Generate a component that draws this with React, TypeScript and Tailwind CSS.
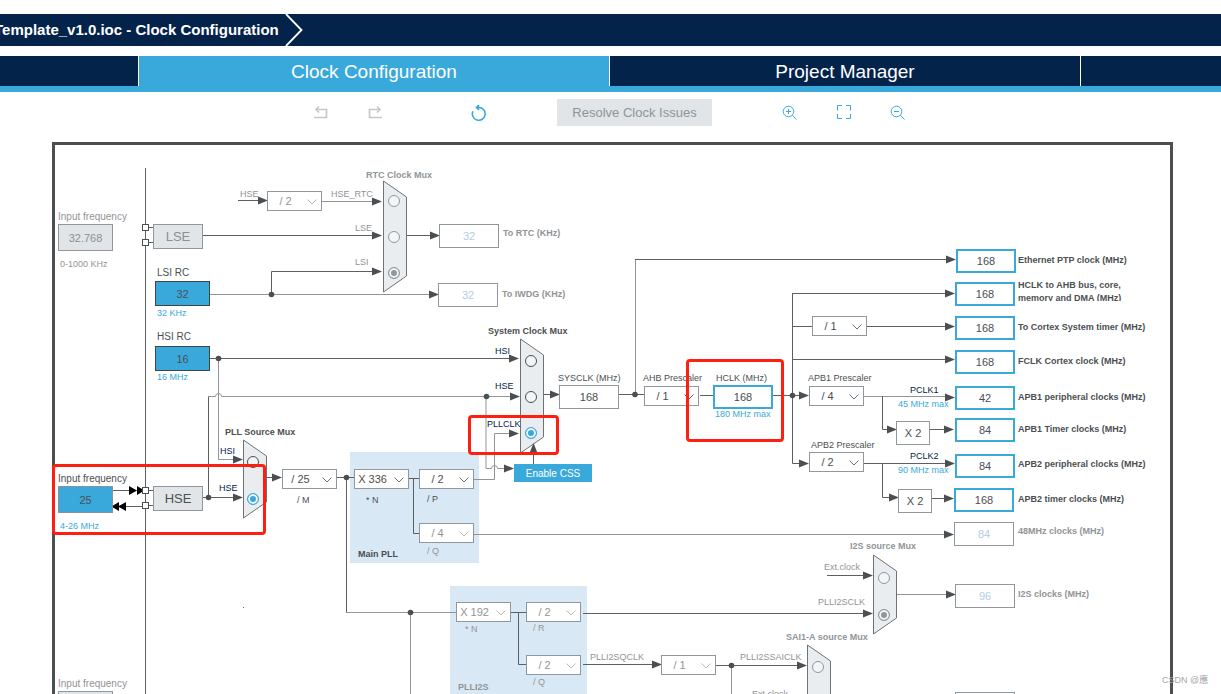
import type { CSSProperties, ReactNode } from 'react';
import { clsx } from 'clsx';

// Diagram coordinates count from the window corner, FRAME is where the drawing area starts
const FRAME = { x: 55, y: 145 };

const at = (x: number, y: number, w?: number, h?: number): CSSProperties => ({
  left: x - FRAME.x,
  top: y - FRAME.y,
  width: w,
  height: h,
});

type Tone = 'dark' | 'muted' | 'blue' | 'navy';

type LabelDef = {
  text: string;
  x: number;
  y: number;
  tone?: Tone;
  bold?: boolean;
  large?: boolean;
  htmlFor?: string;
};

type FieldKind = 'source' | 'sourceDark' | 'idle' | 'plain' | 'active' | 'off';

type FieldDef = {
  id: string;
  value: string;
  x: number;
  y: number;
  w: number;
  h: number;
  kind: FieldKind;
  name?: string;
};

type SelectDef = {
  id: string;
  value: string;
  x: number;
  y: number;
  off?: boolean;
  name?: string;
};

type MuxDef = {
  name: string;
  x: number;
  y: number;
  h: number;
  radioX: number;
  inputs: { label: string; y: number }[];
  selected: string;
  off?: boolean;
};

type WireDef = { d: string; soft?: boolean };
type ArrowDef = { x: number; y: number; up?: boolean };

const labels: LabelDef[] = [
  { text: 'Input frequency', x: 58, y: 220, tone: 'muted', large: true, htmlFor: 'lse-in' },
  { text: '0-1000 KHz', x: 60, y: 267, tone: 'muted' },
  { text: 'LSI RC', x: 157, y: 276, large: true, htmlFor: 'lsi' },
  { text: '32 KHz', x: 157, y: 316, tone: 'blue' },
  { text: 'HSI RC', x: 157, y: 340, large: true, htmlFor: 'hsi' },
  { text: '16 MHz', x: 157, y: 380, tone: 'blue' },
  { text: 'Input frequency', x: 58, y: 482, large: true, htmlFor: 'hse-in' },
  { text: '4-26 MHz', x: 60, y: 529, tone: 'blue' },
  { text: 'Input frequency', x: 58, y: 687, tone: 'muted', large: true, htmlFor: 'i2s-in' },

  { text: 'RTC Clock Mux', x: 366, y: 178, tone: 'muted', bold: true },
  { text: 'HSE', x: 240, y: 197, tone: 'muted' },
  { text: 'HSE_RTC', x: 331, y: 197, tone: 'muted' },
  { text: 'LSE', x: 355, y: 231, tone: 'muted' },
  { text: 'LSI', x: 355, y: 265, tone: 'muted' },
  { text: 'To RTC (KHz)', x: 503, y: 236, tone: 'muted', bold: true, htmlFor: 'rtc' },
  { text: 'To IWDG (KHz)', x: 502, y: 297, tone: 'muted', bold: true, htmlFor: 'iwdg' },

  { text: 'PLL Source Mux', x: 225, y: 435, bold: true },
  { text: 'HSI', x: 220, y: 454, tone: 'navy' },
  { text: 'HSE', x: 219, y: 491, tone: 'navy' },
  { text: '/ M', x: 297, y: 503, htmlFor: 'pll-m' },
  { text: '* N', x: 366, y: 503, htmlFor: 'pll-n' },
  { text: '/ P', x: 427, y: 502, htmlFor: 'pll-p' },
  { text: '/ Q', x: 427, y: 554, tone: 'muted', htmlFor: 'pll-q' },
  { text: 'Main PLL', x: 358, y: 557, bold: true },
  { text: '* N', x: 465, y: 632, tone: 'muted', htmlFor: 'i2s-n' },
  { text: '/ R', x: 533, y: 631, tone: 'muted', htmlFor: 'i2s-r' },
  { text: '/ Q', x: 533, y: 685, tone: 'muted', htmlFor: 'i2s-q' },
  { text: 'PLLI2S', x: 458, y: 690, tone: 'muted', bold: true },

  { text: 'System Clock Mux', x: 488, y: 334, bold: true },
  { text: 'HSI', x: 495, y: 354, tone: 'navy' },
  { text: 'HSE', x: 495, y: 389, tone: 'navy' },
  { text: 'PLLCLK', x: 487, y: 427, tone: 'navy' },
  { text: 'SYSCLK (MHz)', x: 558, y: 381, htmlFor: 'sysclk' },
  { text: 'AHB Prescaler', x: 643, y: 381, htmlFor: 'ahb' },
  { text: 'HCLK (MHz)', x: 716, y: 381, htmlFor: 'hclk' },
  { text: '180 MHz max', x: 715, y: 417, tone: 'blue' },

  { text: 'APB1 Prescaler', x: 808, y: 381, htmlFor: 'apb1' },
  { text: 'PCLK1', x: 910, y: 393, tone: 'navy' },
  { text: '45 MHz max', x: 898, y: 407, tone: 'blue' },
  { text: 'APB2 Prescaler', x: 811, y: 448, htmlFor: 'apb2' },
  { text: 'PCLK2', x: 910, y: 459, tone: 'navy' },
  { text: '90 MHz max', x: 898, y: 473, tone: 'blue' },

  { text: 'Ethernet PTP clock (MHz)', x: 1018, y: 263, bold: true, htmlFor: 'eth' },
  { text: 'To Cortex System timer (MHz)', x: 1018, y: 330, bold: true, htmlFor: 'systick' },
  { text: 'FCLK Cortex clock (MHz)', x: 1018, y: 364, bold: true, htmlFor: 'fclk' },
  { text: 'APB1 peripheral clocks (MHz)', x: 1018, y: 400, bold: true, htmlFor: 'apb1-p' },
  { text: 'APB1 Timer clocks (MHz)', x: 1018, y: 432, bold: true, htmlFor: 'apb1-t' },
  { text: 'APB2 peripheral clocks (MHz)', x: 1018, y: 467, bold: true, htmlFor: 'apb2-p' },
  { text: 'APB2 timer clocks (MHz)', x: 1018, y: 502, bold: true, htmlFor: 'apb2-t' },
  { text: '48MHz clocks (MHz)', x: 1018, y: 534, tone: 'muted', bold: true, htmlFor: 'usb' },
  { text: 'I2S clocks (MHz)', x: 1018, y: 597, tone: 'muted', bold: true, htmlFor: 'i2s' },

  { text: 'I2S source Mux', x: 850, y: 549, tone: 'muted', bold: true },
  { text: 'Ext.clock', x: 824, y: 570, tone: 'muted' },
  { text: 'PLLI2SCLK', x: 818, y: 605, tone: 'muted' },
  { text: 'SAI1-A source Mux', x: 786, y: 640, tone: 'muted', bold: true },
  { text: 'PLLI2SQCLK', x: 590, y: 660, tone: 'muted' },
  { text: 'PLLI2SSAICLK', x: 740, y: 660, tone: 'muted' },
  { text: 'Ext.clock', x: 752, y: 697, tone: 'muted' },
];

const fields: FieldDef[] = [
  { id: 'lse-in', value: '32.768', x: 58, y: 224, w: 55, h: 27, kind: 'idle' },
  { id: 'lsi', value: '32', x: 155, y: 281, w: 55, h: 25, kind: 'sourceDark' },
  { id: 'hsi', value: '16', x: 155, y: 346, w: 55, h: 25, kind: 'sourceDark' },
  { id: 'hse-in', value: '25', x: 58, y: 486, w: 55, h: 27, kind: 'source' },
  { id: 'i2s-in', value: '', x: 58, y: 691, w: 55, h: 27, kind: 'idle' },
  { id: 'rtc', value: '32', x: 439, y: 224, w: 60, h: 24, kind: 'off' },
  { id: 'iwdg', value: '32', x: 438, y: 283, w: 60, h: 24, kind: 'off' },
  { id: 'sysclk', value: '168', x: 559, y: 385, w: 60, h: 24, kind: 'plain' },
  { id: 'hclk', value: '168', x: 713, y: 385, w: 60, h: 24, kind: 'active' },
  { id: 'eth', value: '168', x: 956, y: 249, w: 60, h: 24, kind: 'active' },
  { id: 'ahb-bus', value: '168', x: 955, y: 282, w: 60, h: 24, kind: 'active' },
  { id: 'systick', value: '168', x: 955, y: 316, w: 60, h: 24, kind: 'active' },
  { id: 'fclk', value: '168', x: 955, y: 350, w: 60, h: 24, kind: 'active' },
  { id: 'apb1-p', value: '42', x: 955, y: 386, w: 60, h: 24, kind: 'active' },
  { id: 'apb1-t', value: '84', x: 955, y: 418, w: 60, h: 24, kind: 'active' },
  { id: 'apb2-p', value: '84', x: 955, y: 454, w: 60, h: 24, kind: 'active' },
  { id: 'apb2-t', value: '168', x: 954, y: 488, w: 60, h: 24, kind: 'active' },
  { id: 'usb', value: '84', x: 954, y: 522, w: 60, h: 24, kind: 'off' },
  { id: 'i2s', value: '96', x: 955, y: 584, w: 60, h: 24, kind: 'off' },
  { id: 'sai-a', value: '', x: 955, y: 692, w: 60, h: 24, kind: 'off', name: 'SAI-A clocks' },
];

const selects: SelectDef[] = [
  { id: 'rtc-div', value: '/ 2', x: 267, y: 191, off: true, name: 'HSE RTC divider' },
  { id: 'pll-m', value: '/ 25', x: 282, y: 469 },
  { id: 'pll-n', value: 'X 336', x: 354, y: 469 },
  { id: 'pll-p', value: '/ 2', x: 419, y: 469 },
  { id: 'pll-q', value: '/ 4', x: 419, y: 523, off: true },
  { id: 'i2s-n', value: 'X 192', x: 456, y: 602, off: true },
  { id: 'i2s-r', value: '/ 2', x: 526, y: 602, off: true },
  { id: 'i2s-q', value: '/ 2', x: 526, y: 655, off: true },
  { id: 'ahb', value: '/ 1', x: 644, y: 386 },
  { id: 'cortex', value: '/ 1', x: 812, y: 316, name: 'Cortex prescaler' },
  { id: 'apb1', value: '/ 4', x: 809, y: 386 },
  { id: 'apb2', value: '/ 2', x: 809, y: 452 },
  { id: 'sai-div', value: '/ 1', x: 661, y: 655, off: true, name: 'SAI divider' },
];

const muxes: MuxDef[] = [
  {
    name: 'RTC Clock Mux', x: 383, y: 181, h: 111, radioX: 394, off: true, selected: 'LSI',
    inputs: [{ label: 'HSE_RTC', y: 201 }, { label: 'LSE', y: 237 }, { label: 'LSI', y: 273 }],
  },
  {
    name: 'System Clock Mux', x: 520, y: 339, h: 114, radioX: 531, selected: 'PLLCLK',
    inputs: [{ label: 'HSI', y: 361 }, { label: 'HSE', y: 397 }, { label: 'PLLCLK', y: 433 }],
  },
  {
    name: 'PLL Source Mux', x: 243, y: 440, h: 78, radioX: 253, selected: 'HSE',
    inputs: [{ label: 'HSI', y: 462 }, { label: 'HSE', y: 499 }],
  },
  {
    name: 'I2S source Mux', x: 873, y: 555, h: 79, radioX: 884, off: true, selected: 'PLLI2SCLK',
    inputs: [{ label: 'Ext.clock', y: 578 }, { label: 'PLLI2SCLK', y: 615 }],
  },
  {
    name: 'SAI1-A source Mux', x: 807, y: 645, h: 115, radioX: 818, off: true, selected: '',
    inputs: [{ label: 'PLLI2SSAICLK', y: 667 }],
  },
];

const wires: WireDef[] = [
  { d: 'M145.5 168V900' },
  { d: 'M148 227.5H153M148 242.5H153M148 490.5H153M148 505.5H153' },
  { d: 'M238 200.5H262' },
  { d: 'M322 201.5H376', soft: true },
  { d: 'M203 235.5H376M407 235.5H434' },
  { d: 'M271.5 294V271.5H376' },
  { d: 'M210 294.5H434', soft: true },
  { d: 'M210 358.5H514' },
  { d: 'M218.5 358V459.5H238', soft: true },
  { d: 'M208.5 497V396' },
  { d: 'M208 396.5H215.5a3 3 0 0 1 6 0H514', soft: true },
  { d: 'M486 396V468.5H491.5a3 3 0 0 1 6 0H508', soft: true },
  { d: 'M474 479.5H494.5V433.5H514', soft: true },
  { d: 'M533.5 464V450' },
  { d: 'M203 497.5H238M267 477.5H276M337 477.5H354' },
  { d: 'M346.5 477V612.5' },
  { d: 'M346 612.5H456M410.5 612V900', soft: true },
  { d: 'M409 478.5H419M413.5 478V533.5H419' },
  { d: 'M474 534.5H948', soft: true },
  { d: 'M511 612.5H526M518.5 612V664.5H526' },
  { d: 'M583 613.5H868M583 664.5H656M716 665.5H802' },
  { d: 'M731.5 665V900', soft: true },
  { d: 'M827 575.5H868' },
  { d: 'M897 594.5H950', soft: true },
  { d: 'M544 394.5H554M619 394.5H644M700 395.5H713M773 395.5H804' },
  { d: 'M635.5 394V259', soft: true },
  { d: 'M635 259.5H950' },
  { d: 'M792.5 293V463.5H804M792 293.5H950M792 326.5H812M867 326.5H950M792 359.5H950' },
  { d: 'M864 396.5H950', soft: true },
  { d: 'M864 463.5H950M882.5 396V429.5H892M882.5 463V497.5H894' },
  { d: 'M930 429.5H950M932 498.5H948' },
  { d: 'M113 490.5H130M126 506.5H142' },
  { d: 'M243 607.5H244' },
];

const arrows: ArrowDef[] = [
  { x: 268, y: 200 }, { x: 382, y: 201 }, { x: 382, y: 235 }, { x: 382, y: 271 },
  { x: 440, y: 235 }, { x: 439, y: 294 }, { x: 519, y: 358 }, { x: 243, y: 459 },
  { x: 520, y: 396 }, { x: 514, y: 468 }, { x: 519, y: 433 }, { x: 533, y: 443, up: true },
  { x: 243, y: 497 }, { x: 282, y: 477 }, { x: 954, y: 534 }, { x: 873, y: 613 },
  { x: 662, y: 664 }, { x: 807, y: 665 }, { x: 873, y: 575 }, { x: 956, y: 594 },
  { x: 560, y: 394 }, { x: 956, y: 259 }, { x: 955, y: 293 }, { x: 955, y: 326 },
  { x: 955, y: 359 }, { x: 809, y: 395 }, { x: 809, y: 463 }, { x: 955, y: 397 },
  { x: 955, y: 463 }, { x: 897, y: 429 }, { x: 899, y: 497 }, { x: 954, y: 429 },
  { x: 954, y: 498 },
];

const dots = [
  [271.5, 294.5], [218.5, 358.5], [486.5, 396.5], [208.5, 497.5], [346.5, 477.5], [410.5, 612.5],
  [731.5, 665.5], [635, 394.5], [792.5, 395.5],
];

const pads = [[142.5, 224.5], [142.5, 239.5], [142.5, 487.5], [142.5, 502.5]];

const highlights = [
  { x: 52, y: 464, w: 214, h: 71 },
  { x: 468, y: 415, w: 91, h: 40 },
  { x: 686, y: 359, w: 98, h: 83 },
];

const toneClass: Record<Tone, string> = {
  dark: 'text-[#4b4f52]',
  muted: 'text-[#919496]',
  blue: 'text-[#39a9dc]',
  navy: 'text-[#03234b]',
};

const fieldClass: Record<FieldKind, string> = {
  source: 'border border-[#8c9298] bg-[#39a9dc] text-[#4b4f52]',
  sourceDark: 'border border-[#3f4447] bg-[#39a9dc] text-[#4b4f52]',
  idle: 'border border-[#90989e] bg-[#e1e5e8] text-[#8c8f92]',
  plain: 'border border-[#90989e] bg-white text-[#4b4f52]',
  active: 'border-2 border-[#39a9dc] bg-white text-[#4b4f52]',
  off: 'border border-[#90989e] bg-white text-[#b4cde6]',
};

function ToolButton({ label, className, children }: { label: string; className: string; children: ReactNode }) {
  return (
    <button aria-label={label} className={className}>
      <svg viewBox="0 0 16 16" className="block size-4" fill="none" stroke="currentColor">
        {children}
      </svg>
    </button>
  );
}

function Label({ text, x, y, tone = 'dark', bold, large, htmlFor }: LabelDef) {
  const className = clsx(
    'absolute leading-3 whitespace-nowrap',
    large ? 'text-[10px]' : 'text-[9px]',
    bold && 'font-bold',
    toneClass[tone],
  );
  // y is the text baseline
  const style = at(x, y - 9);
  return htmlFor ? (
    <label htmlFor={htmlFor} className={className} style={style}>{text}</label>
  ) : (
    <span className={className} style={style}>{text}</span>
  );
}

function Field({ id, value, x, y, w, h, kind, name }: FieldDef) {
  return (
    <input
      id={id}
      aria-label={name}
      defaultValue={value}
      className={clsx('absolute text-center text-[11px] outline-none', fieldClass[kind])}
      style={at(x, y, w, h)}
    />
  );
}

function Prescaler({ id, value, x, y, off, name }: SelectDef) {
  return (
    <div className="absolute" style={at(x, y, 55, 20)}>
      <select
        id={id}
        aria-label={name}
        className={clsx(
          'block h-full w-full appearance-none border border-[#90989e] bg-white pr-[18px] text-center text-[11px] outline-none',
          off ? 'text-[#919496]' : 'text-[#4b4f52]',
        )}
      >
        <option>{value}</option>
      </select>
      <svg
        viewBox="0 0 10 6"
        className={clsx('pointer-events-none absolute top-2 right-[5px] h-1.5 w-2.5', off ? 'text-[#b9bcbe]' : 'text-[#6c7073]')}
        fill="none"
        stroke="currentColor"
      >
        <path d="M.5 .5L5 5L9.5 .5" />
      </svg>
    </div>
  );
}

function Wiring() {
  return (
    <svg className="pointer-events-none absolute top-0 left-0 h-full w-full overflow-visible">
      <g transform={`translate(${-FRAME.x} ${-FRAME.y})`}>
        {wires.map((wire) => (
          <path key={wire.d} d={wire.d} fill="none" stroke={wire.soft ? '#929597' : '#5c6063'} />
        ))}
        {pads.map(([x, y]) => (
          <rect key={y} x={x} y={y} width="6" height="6" fill="#fff" stroke="#4b4f52" />
        ))}
        <path d="M129 486L137 490.5L129 495ZM137 486L142 489V492L137 495Z" fill="#000" />
        <path d="M126 502L118 506.5L126 511ZM119 502L113 505.5V507.5L119 511Z" fill="#000" />
        {muxes.map((mux) => (
          <path
            key={mux.name}
            d={`M${mux.x + 0.5} ${mux.y}l23 16v${mux.h - 32}l-23 16z`}
            fill="#e9edf0"
            stroke="#6c7276"
          />
        ))}
        {arrows.map(({ x, y, up }) => (
          <path
            key={`${x}-${y}`}
            d={up ? `M${x + 0.5} ${y}l4 10h-8z` : `M${x} ${y + 0.5}l-10 4v-8z`}
            fill="#4b4f52"
          />
        ))}
        {dots.map(([x, y]) => (
          <circle key={x} cx={x} cy={y} r="2.8" fill="#4b4f52" />
        ))}
      </g>
    </svg>
  );
}

function Mux({ name, radioX, inputs, selected, off }: MuxDef) {
  return (
    <>
      {inputs.map((input) => (
        <input
          key={input.label}
          type="radio"
          name={name}
          aria-label={`${name} ${input.label}`}
          defaultChecked={input.label === selected}
          className={clsx(
            'absolute appearance-none rounded-full border bg-[#f3f5f7] checked:shadow-[inset_0_0_0_2px_#f3f5f7]',
            off
              ? 'border-[#90989e] checked:bg-[#90989e]'
              : 'border-[#4b4f52] checked:border-[#39a9dc] checked:bg-[#39a9dc]',
          )}
          style={at(radioX - 6, input.y - 6, 12, 12)}
        />
      ))}
    </>
  );
}

function ClockDiagram() {
  return (
    <div className="relative mr-12 ml-[52px] h-full border-x-[3px] border-t-[3px] border-[#4b4f52]">
      <div className="absolute bg-[#d9e8f5]" style={at(350, 452, 129, 111)} />
      <div className="absolute bg-[#d9e8f5]" style={at(450, 586, 137, 160)} />
      <Wiring />
      {selects.map((item) => <Prescaler key={item.id} {...item} />)}
      {fields.map((item) => <Field key={item.id} {...item} />)}
      {muxes.map((item) => <Mux key={item.name} {...item} />)}

      <button className="absolute border border-[#90989e] bg-[#e1e5e8] text-[13px] text-[#8c8f92]" style={at(153, 224, 50, 25)}>LSE</button>
      <button className="absolute border border-[#90989e] bg-[#e1e5e8] text-[13px] text-[#4b4f52]" style={at(153, 486, 50, 25)}>HSE</button>
      <button className="absolute bg-[#39a9dc] text-[10px] text-white" style={at(514, 464, 78, 18)}>Enable CSS</button>
      <span className="absolute border border-[#90989e] bg-white text-center text-[11px] leading-[22px] text-[#4b4f52]" style={at(896, 421, 34, 24)}>X 2</span>
      <span className="absolute border border-[#90989e] bg-white text-center text-[11px] leading-[22px] text-[#4b4f52]" style={at(898, 489, 34, 24)}>X 2</span>

      {labels.map((item) => <Label key={`${item.x}-${item.y}`} {...item} />)}
      <label
        htmlFor="ahb-bus"
        className="absolute overflow-hidden text-[9px] leading-[13px] font-bold text-[#4b4f52]"
        style={at(1018, 279, 124, 22)}
      >
        HCLK to AHB bus, core, memory and DMA (MHz)
      </label>

      {highlights.map((box) => (
        <div
          key={box.x}
          className="pointer-events-none absolute rounded-sm border-[3px] border-[#ff1f10]"
          style={at(box.x, box.y, box.w, box.h)}
        />
      ))}
      <span
        className="absolute font-['Liberation_Sans','Noto_Sans_CJK_TC',sans-serif] text-[9px] leading-3 whitespace-nowrap text-[#a3a5a7]"
        style={at(1162, 674)}
      >
        CSDN @應
      </span>
    </div>
  );
}

export default function App() {
  return (
    <div className="flex h-screen flex-col overflow-hidden bg-white pt-3.5 font-['Liberation_Sans',Arial,sans-serif]">
      <header className="flex h-8 shrink-0 items-center gap-1.5 bg-[#03234b] text-white">
        <h1 className="-ml-1.5 text-[15px] font-bold whitespace-nowrap">Template_v1.0.ioc - Clock Configuration</h1>
        <svg viewBox="0 0 18 32" className="h-8 w-[18px]" fill="none" stroke="currentColor" strokeWidth="1.8">
          <path d="M1 0L16.5 16L1 32" />
        </svg>
      </header>

      <nav className="mt-2.5 grid h-9 shrink-0 grid-cols-[138fr_470fr_470fr_140fr] gap-x-px border-b-[6px] border-[#39a9dc] text-[19px] leading-7 text-white">
        <button aria-label="Pinout" className="bg-[#03234b]" />
        <button className="bg-[#39a9dc] pt-0.5">Clock Configuration</button>
        <button className="bg-[#03234b] pt-0.5">Project Manager</button>
        <button aria-label="Tools" className="bg-[#03234b]" />
      </nav>

      {/* Toolbar */}
      <div className="flex h-[50px] shrink-0 items-start justify-center pt-[7px] pr-0.5">
        <div className="flex h-[27px] items-center">
          <ToolButton label="Undo" className="mr-[38px] text-[#c8c8c8]">
            <path strokeWidth="1.7" d="M3 4.5H13.5V12.5H1M6 1.5L3 4.5L6 7.5" />
          </ToolButton>
          <ToolButton label="Redo" className="mr-[88px] text-[#c8c8c8]">
            <path strokeWidth="1.7" d="M13 4.5H2.5V12.5H15M10 1.5L13 4.5L10 7.5" />
          </ToolButton>
          <ToolButton label="Reset" className="mr-[70px] text-[#39a9dc]">
            <path strokeWidth="1.6" d="M1.9 6.2A6.4 6.4 0 1 0 8 2.4H5.5M8 0L5.5 2.4L8 4.8" />
          </ToolButton>
          <button className="h-[27px] bg-[#e1e5e8] px-[15px] text-[13px] text-[#8f9395]">Resolve Clock Issues</button>
          <ToolButton label="Zoom in" className="ml-[70px] text-[#39a9dc]">
            <circle cx="6.5" cy="6.5" r="5.3" />
            <path d="M4 6.5H9M6.5 4V9M10.3 10.3L14.5 14.5" />
          </ToolButton>
          <ToolButton label="Fit" className="ml-[38px] text-[#39a9dc]">
            <path d="M1.5 5.5V.5H6M10 .5H14.5V5.5M14.5 9V13.5H10M6 13.5H1.5V9" />
          </ToolButton>
          <ToolButton label="Zoom out" className="ml-[38px] text-[#39a9dc]">
            <circle cx="6.5" cy="6.5" r="5.3" />
            <path d="M4 6.5H9M10.3 10.3L14.5 14.5" />
          </ToolButton>
        </div>
      </div>

      <main className="min-h-0 flex-1 overflow-hidden">
        <ClockDiagram />
      </main>
    </div>
  );
}
